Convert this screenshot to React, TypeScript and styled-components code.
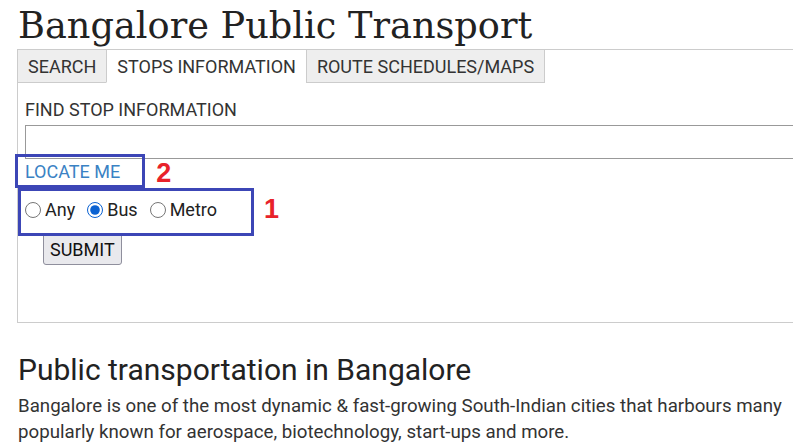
import React from "react"
import styled, { createGlobalStyle } from "styled-components"

const GlobalStyle = createGlobalStyle`
  html, body {
    margin: 0;
    padding: 0;
    background: #fff;
    overflow: hidden;
  }
  body {
    font-family: Roboto, "Liberation Sans", sans-serif;
    color: #222;
  }
`

const Page = styled.div`
  width: 900px;
  padding-left: 17px;
`

const Title = styled.h1`
  margin: 0;
  padding: 2px 0 0 1px;
  font-family: "DejaVu Serif", "Liberation Serif", serif;
  font-weight: 400;
  font-size: 36.7px;
  line-height: 47px;
  color: #222;
`

const TabList = styled.div`
  display: flex;
  border-top: 1px solid #ccc;
`

const Tab = styled.div<{ $active?: boolean }>`
  height: 32px;
  padding: 0 10px;
  display: flex;
  align-items: center;
  font-size: 18px;
  text-transform: uppercase;
  color: #333;
  background: ${(p) => (p.$active ? "#fff" : "#eee")};
  border-left: 1px solid #ccc;
  border-bottom: 1px solid ${(p) => (p.$active ? "transparent" : "#ccc")};
  &:last-child {
    border-right: 1px solid #ccc;
  }
`

const Panel = styled.div`
  border-left: 1px solid #ccc;
  border-bottom: 1px solid #ccc;
  padding: 16px 0 57px 7px;
`

const Label = styled.div`
  font-size: 18px;
  line-height: 22px;
  text-transform: uppercase;
  color: #333;
  margin-bottom: 4px;
`

const TextInput = styled.input`
  display: block;
  box-sizing: border-box;
  width: 100%;
  height: 34px;
  border: 1px solid #999;
  margin: 0;
`

const Annotated = styled.div<{ $top: number; $right: number; $bottom: number; $left: number }>`
  position: relative;
  display: inline-block;
  &::after {
    content: "";
    position: absolute;
    top: ${(p) => -p.$top}px;
    right: ${(p) => -p.$right}px;
    bottom: ${(p) => -p.$bottom}px;
    left: ${(p) => -p.$left}px;
    border: 3px solid #3c46b6;
    pointer-events: none;
  }
`

const Marker = styled.span<{ $x: number; $y: number }>`
  position: absolute;
  left: calc(100% + ${(p) => p.$x}px);
  top: ${(p) => p.$y}px;
  font-family: "Liberation Sans", sans-serif;
  font-weight: 700;
  font-size: 27px;
  line-height: 28px;
  color: #e8222a;
`

const LocateRow = styled.div`
  height: 26px;
`

const LocateLink = styled.a`
  font-size: 18px;
  line-height: 26px;
  color: #3a82c4;
  text-decoration: none;
  text-transform: uppercase;
`

const RadioRow = styled.div`
  margin-top: 12px;
  height: 25px;
`

const RadioLabel = styled.label`
  display: inline-flex;
  align-items: center;
  font-size: 18px;
  line-height: 25px;
  color: #222;
  & + & {
    margin-left: 12px;
  }
`

const Radio = styled.input`
  width: 16px;
  height: 16px;
  margin: 0 4px 0 0;
  accent-color: #0a62d2;
`

const SubmitRow = styled.div`
  margin-top: 11px;
  padding-left: 18px;
`

const SubmitButton = styled.button`
  height: 32px;
  padding: 0 6px;
  font-family: Roboto, "Liberation Sans", sans-serif;
  font-size: 18px;
  text-transform: uppercase;
  color: #111;
  background: #e9e9ed;
  border: 1px solid #8f8f9d;
  border-radius: 3px;
`

const Heading = styled.h2`
  margin: 27px 0 0 1px;
  font-weight: 400;
  font-size: 30px;
  line-height: 40px;
  color: #222;
`

const Paragraph = styled.p`
  margin: 3px 0 0 1px;
  font-size: 18.7px;
  line-height: 26px;
  color: #333;
  white-space: nowrap;
`

export default function App() {
  return (
    <>
      <GlobalStyle />
      <Page>
        <Title>Bangalore Public Transport</Title>
        <TabList>
          <Tab>Search</Tab>
          <Tab $active>Stops Information</Tab>
          <Tab>Route Schedules/Maps</Tab>
        </TabList>
        <Panel>
          <Label>Find Stop Information</Label>
          <TextInput type="text" />
          <LocateRow>
            <Annotated $top={5} $right={25} $bottom={3} $left={10}>
              <LocateLink href="#">Locate me</LocateLink>
              <Marker $x={36} $y={0}>2</Marker>
            </Annotated>
          </LocateRow>
          <RadioRow>
            <Annotated $top={9} $right={37} $bottom={14} $left={7}>
              <RadioLabel>
                <Radio type="radio" name="mode" />
                Any
              </RadioLabel>
              <RadioLabel>
                <Radio type="radio" name="mode" defaultChecked />
                Bus
              </RadioLabel>
              <RadioLabel>
                <Radio type="radio" name="mode" />
                Metro
              </RadioLabel>
              <Marker $x={47} $y={-2}>1</Marker>
            </Annotated>
          </RadioRow>
          <SubmitRow>
            <SubmitButton type="button">Submit</SubmitButton>
          </SubmitRow>
        </Panel>
        <Heading>Public transportation in Bangalore</Heading>
        <Paragraph>
          Bangalore is one of the most dynamic &amp; fast-growing South-Indian cities that harbours many
          <br />
          popularly known for aerospace, biotechnology, start-ups and more.
        </Paragraph>
      </Page>
    </>
  )
}
